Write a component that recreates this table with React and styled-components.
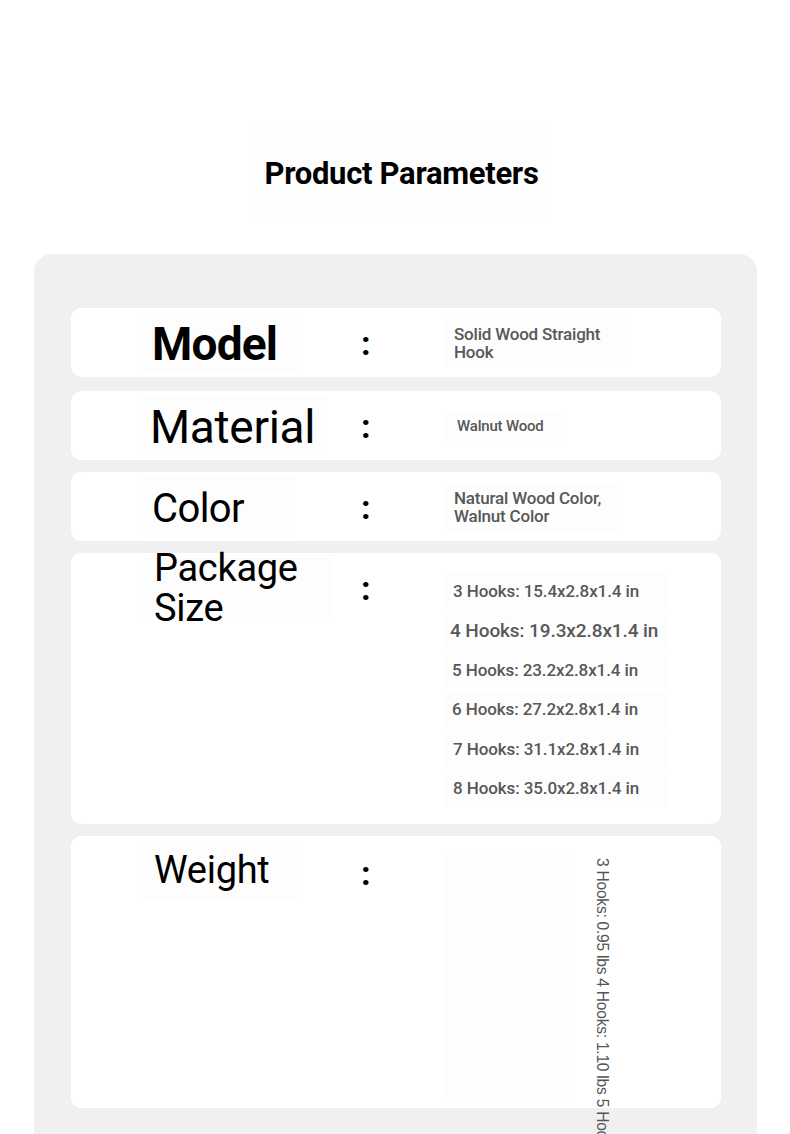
import React from "react";
import styled, { createGlobalStyle } from "styled-components";

const Global = createGlobalStyle`
  html, body { margin: 0; padding: 0; background: #ffffff; }
  body { font-family: Roboto, "Noto Sans", Arial, sans-serif; color: #000; }
`;

const Page = styled.div`
  width: 790px;
  overflow: hidden;
`;

const TitleBox = styled.div`
  width: 297px;
  height: 95px;
  margin: 127px 0 0 248px;
  background: #fdfdfd;
  display: flex;
  align-items: center;
  justify-content: center;
  padding-left: 10px;
  padding-bottom: 2px;
  box-sizing: border-box;
`;

const Title = styled.h1`
  margin: 0;
  font-family: Roboto, Arial, sans-serif;
  font-weight: 700;
  font-size: 31px;
  letter-spacing: -0.3px;
  color: #000;
`;

const Panel = styled.section`
  margin: 32px 33px 0 34px;
  background: #f0f0f0;
  border-radius: 18px 18px 0 0;
  padding: 54px 36px 80px 37px;
  display: flex;
  flex-direction: column;
  gap: 12px;
`;

const Card = styled.div`
  background: #ffffff;
  border-radius: 10px;
  height: ${(p) => p.$h}px;
  margin-bottom: ${(p) => p.$mb || 0}px;
  display: grid;
  grid-template-columns: 220px 82px 1fr;
  grid-template-rows: 69px 1fr;
  padding-left: 72px;
  box-sizing: border-box;
  overflow: visible;
`;

const LabelCell = styled.div`
  grid-row: 1;
  grid-column: 1;
  height: 69px;
  display: flex;
  align-items: center;
`;

const LabelBox = styled.div`
  height: 61px;
  width: ${(p) => p.$w}px;
  background: #fdfdfd;
  display: flex;
  align-items: center;
  padding-left: ${(p) => p.$indent}px;
  padding-top: ${(p) => p.$pt || 0}px;
  box-sizing: border-box;
  overflow: visible;
`;

const Label = styled.span`
  font-family: Roboto, Arial, sans-serif;
  font-size: ${(p) => p.$size}px;
  font-weight: ${(p) => (p.$bold ? 700 : 400)};
  letter-spacing: ${(p) => p.$ls || 0}px;
  line-height: ${(p) => p.$lh || "1.1"};
  color: #000;
  white-space: nowrap;
`;

const ColonCell = styled.div`
  grid-row: 1;
  grid-column: 2;
  height: 69px;
  display: flex;
  align-items: center;
  font-family: Roboto, Arial, sans-serif;
  font-weight: 700;
  font-size: 34px;
  line-height: 1;
  color: #000;
  padding-top: ${(p) => p.$pt || 0}px;
  margin-left: -2px;
  box-sizing: border-box;
`;

const ValueCell = styled.div`
  grid-row: 1;
  grid-column: 3;
  height: 69px;
  display: flex;
  align-items: center;
`;

const ValueBox = styled.div`
  background: #fdfdfd;
  padding: 6px ${(p) => p.$pr || 20}px 6px ${(p) => p.$pl || 9}px;
`;

const ValueText = styled.div`
  font-family: Roboto, Arial, sans-serif;
  font-weight: 500;
  font-size: ${(p) => p.$size || 17}px;
  line-height: 18px;
  color: #585858;
  letter-spacing: -0.2px;
`;

const SizeList = styled.div`
  grid-row: 1 / 3;
  grid-column: 3;
  align-self: start;
  padding-top: 19px;
  display: flex;
  flex-direction: column;
  gap: 2.6px;
`;

const SizeItem = styled.div`
  width: 223px;
  height: 37px;
  background: #fdfdfd;
  display: flex;
  align-items: center;
  padding-left: ${(p) => p.$pl}px;
  box-sizing: border-box;
  font-family: Roboto, Arial, sans-serif;
  font-weight: 500;
  font-size: ${(p) => p.$size}px;
  letter-spacing: -0.1px;
  color: #585858;
  white-space: nowrap;
`;

const WeightArea = styled.div`
  grid-row: 1 / 3;
  grid-column: 3;
  display: flex;
  align-items: flex-start;
  gap: 24px;
  height: 0;
  overflow: visible;
`;

const WeightBox = styled.div`
  width: 125px;
  height: 247px;
  margin-top: 14px;
  background: #fdfdfd;
  flex: none;
`;

const VerticalText = styled.div`
  writing-mode: vertical-rl;
  white-space: nowrap;
  margin-top: 22px;
  font-family: "Liberation Sans", Arial, sans-serif;
  font-size: 15.6px;
  letter-spacing: -0.25px;
  line-height: 16px;
  color: #555555;
  flex: none;
`;

const sizes = [
  { t: "3 Hooks: 15.4x2.8x1.4 in", s: 17, pl: 8 },
  { t: "4 Hooks: 19.3x2.8x1.4 in", s: 19, pl: 5 },
  { t: "5 Hooks: 23.2x2.8x1.4 in", s: 17, pl: 7 },
  { t: "6 Hooks: 27.2x2.8x1.4 in", s: 17, pl: 7 },
  { t: "7 Hooks: 31.1x2.8x1.4 in", s: 17, pl: 8 },
  { t: "8 Hooks: 35.0x2.8x1.4 in", s: 17, pl: 8 },
];

export default function App() {
  return (
    <Page>
      <Global />
      <TitleBox>
        <Title>Product Parameters</Title>
      </TitleBox>
      <Panel>
        <Card $h={69} $mb={2}>
          <LabelCell>
            <LabelBox $w={155} $indent={9} $pt={4}>
              <Label $size={46} $bold $ls={-0.8}>Model</Label>
            </LabelBox>
          </LabelCell>
          <ColonCell>:</ColonCell>
          <ValueCell>
            <ValueBox $pr={30}>
              <ValueText>Solid Wood Straight<br />Hook</ValueText>
            </ValueBox>
          </ValueCell>
        </Card>

        <Card $h={69}>
          <LabelCell>
            <LabelBox $w={185} $indent={7} $pt={3}>
              <Label $size={46} $ls={-0.3}>Material</Label>
            </LabelBox>
          </LabelCell>
          <ColonCell>:</ColonCell>
          <ValueCell>
            <ValueBox $pl={12} $pr={22}>
              <ValueText $size={15}>Walnut Wood</ValueText>
            </ValueBox>
          </ValueCell>
        </Card>

        <Card $h={69}>
          <LabelCell>
            <LabelBox $w={152} $indent={9} $pt={5}>
              <Label $size={40} $ls={-0.6}>Color</Label>
            </LabelBox>
          </LabelCell>
          <ColonCell>:</ColonCell>
          <ValueCell>
            <ValueBox $pr={22}>
              <ValueText>Natural Wood Color,<br />Walnut Color</ValueText>
            </ValueBox>
          </ValueCell>
        </Card>

        <Card $h={271}>
          <LabelCell>
            <LabelBox $w={188} $indent={11}>
              <Label $size={38} $lh="40px" $ls={-0.3}>Package<br />Size</Label>
            </LabelBox>
          </LabelCell>
          <ColonCell>:</ColonCell>
          <SizeList>
            {sizes.map((s) => (
              <SizeItem key={s.t} $size={s.s} $pl={s.pl}>{s.t}</SizeItem>
            ))}
          </SizeList>
        </Card>

        <Card $h={272}>
          <LabelCell>
            <LabelBox $w={160} $indent={11}>
              <Label $size={38} $ls={-0.3}>Weight</Label>
            </LabelBox>
          </LabelCell>
          <ColonCell $pt={4}>:</ColonCell>
          <WeightArea>
            <WeightBox />
            <VerticalText>
              3 Hooks: 0.95 lbs 4 Hooks: 1.10 lbs 5 Hooks: 1.25 lbs 6 Hooks: 1.40 lbs 7 Hooks: 1.55 lbs 8 Hooks: 1.70 lbs
            </VerticalText>
          </WeightArea>
        </Card>
      </Panel>
    </Page>
  );
}
